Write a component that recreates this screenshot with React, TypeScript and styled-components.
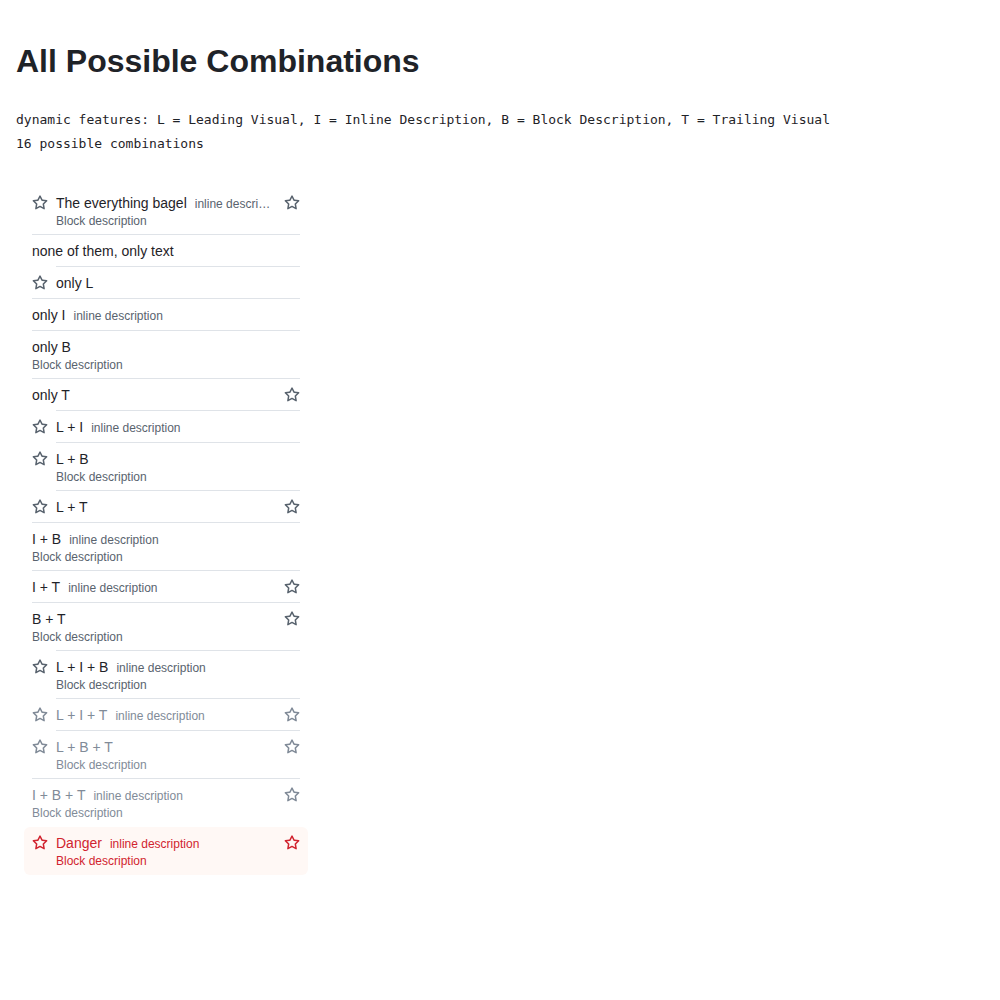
import React from "react";
import styled, { createGlobalStyle, css } from "styled-components";

const Global = createGlobalStyle`
  html, body { margin: 0; padding: 0; background: #ffffff; }
  body { font-family: "Liberation Sans", Arial, sans-serif; color: #1f2328; }
`;

const Page = styled.div`
  padding: 0 16px;
`;

const Title = styled.h1`
  margin: 0;
  padding-top: 41px;
  font-size: 32px;
  line-height: 40px;
  font-weight: 700;
  color: #1f2328;
`;

const Mono = styled.p`
  margin: 0;
  font-family: "DejaVu Sans Mono", monospace;
  font-size: 13px;
  line-height: 24px;
  color: #1f2328;
`;

const Info = styled.div`
  margin-top: 27px;
`;

const List = styled.ul`
  list-style: none;
  margin: 23px 0 0;
  padding: 8px 0;
  width: 300px;
`;

type Variant = "default" | "disabled" | "danger";

const colorFor = (v: Variant, kind: "fg" | "muted" | "icon") => {
  if (v === "danger") return "#d1242f";
  if (v === "disabled") return "#818b98";
  return kind === "fg" ? "#1f2328" : "#59636e";
};

const Item = styled.li<{ $variant: Variant; $bg?: boolean }>`
  display: flex;
  margin: 0 8px;
  padding: 0 8px;
  border-radius: 6px;
  font-size: 14px;
  line-height: 20px;
  color: ${(p) => colorFor(p.$variant, "fg")};
  ${(p) =>
    p.$bg &&
    css`
      background: #fff8f5;
    `}
`;

const Leading = styled.span<{ $variant: Variant }>`
  flex: 0 0 16px;
  width: 16px;
  height: 20px;
  margin-top: 6px;
  margin-right: 8px;
  display: flex;
  align-items: center;
  color: ${(p) => colorFor(p.$variant, "icon")};
`;

const Content = styled.div<{ $divider: boolean }>`
  flex: 1;
  min-width: 0;
  display: flex;
  padding: 6px 0;
  border-top: 1px solid ${(p) => (p.$divider ? "#dfe3e8" : "transparent")};
  margin-top: -1px;
`;

const Main = styled.div`
  flex: 1;
  min-width: 0;
  display: flex;
  flex-direction: column;
`;

const TopLine = styled.div`
  display: flex;
  align-items: baseline;
  min-width: 0;
  white-space: nowrap;
`;

const Label = styled.span`
  flex: 0 0 auto;
`;

const Inline = styled.span<{ $variant: Variant }>`
  margin-left: 8px;
  font-size: 12px;
  line-height: 16px;
  color: ${(p) => colorFor(p.$variant, "muted")};
  overflow: hidden;
  text-overflow: ellipsis;
  min-width: 0;
`;

const Block = styled.span<{ $variant: Variant }>`
  font-size: 12px;
  line-height: 16px;
  color: ${(p) => colorFor(p.$variant, "muted")};
`;

const Trailing = styled.span<{ $variant: Variant }>`
  flex: 0 0 16px;
  width: 16px;
  height: 20px;
  margin-left: 8px;
  display: flex;
  align-items: center;
  color: ${(p) => colorFor(p.$variant, "icon")};
`;

const Star = () => (
  <svg width="16" height="16" viewBox="0 0 16 16" fill="currentColor" aria-hidden="true">
    <path d="M8 .25a.75.75 0 0 1 .673.418l1.882 3.815 4.21.612a.75.75 0 0 1 .416 1.279l-3.046 2.97.719 4.192a.751.751 0 0 1-1.088.791L8 12.347l-3.766 1.98a.75.75 0 0 1-1.088-.79l.72-4.194L.818 6.374a.75.75 0 0 1 .416-1.28l4.21-.611L7.327.668A.75.75 0 0 1 8 .25Zm0 2.445L6.615 5.5a.75.75 0 0 1-.564.41l-3.097.45 2.24 2.184a.75.75 0 0 1 .216.664l-.528 3.084 2.769-1.456a.75.75 0 0 1 .698 0l2.77 1.456-.53-3.084a.75.75 0 0 1 .216-.664l2.24-2.183-3.096-.45a.75.75 0 0 1-.564-.41L8 2.694Z" />
  </svg>
);

type Row = {
  label: string;
  L?: boolean;
  I?: boolean;
  B?: boolean;
  T?: boolean;
  variant?: Variant;
  bg?: boolean;
};

const rows: Row[] = [
  { label: "The everything bagel", L: true, I: true, B: true, T: true },
  { label: "none of them, only text" },
  { label: "only L", L: true },
  { label: "only I", I: true },
  { label: "only B", B: true },
  { label: "only T", T: true },
  { label: "L + I", L: true, I: true },
  { label: "L + B", L: true, B: true },
  { label: "L + T", L: true, T: true },
  { label: "I + B", I: true, B: true },
  { label: "I + T", I: true, T: true },
  { label: "B + T", B: true, T: true },
  { label: "L + I + B", L: true, I: true, B: true },
  { label: "L + I + T", L: true, I: true, T: true, variant: "disabled" },
  { label: "L + B + T", L: true, B: true, T: true, variant: "disabled" },
  { label: "I + B + T", I: true, B: true, T: true, variant: "disabled" },
  { label: "Danger", L: true, I: true, B: true, T: true, variant: "danger", bg: true },
];

export default function App() {
  return (
    <Page>
      <Global />
      <Title>All Possible Combinations</Title>
      <Info>
        <Mono>
          dynamic features: L = Leading Visual, I = Inline Description, B = Block Description, T = Trailing Visual
        </Mono>
        <Mono>16 possible combinations</Mono>
      </Info>
      <List>
        {rows.map((r, i) => {
          const v: Variant = r.variant ?? "default";
          return (
            <Item key={r.label} $variant={v} $bg={r.bg}>
              {r.L && (
                <Leading $variant={v}>
                  <Star />
                </Leading>
              )}
              <Content $divider={i > 0 && !r.bg}>
                <Main>
                  <TopLine>
                    <Label>{r.label}</Label>
                    {r.I && <Inline $variant={v}>inline description</Inline>}
                  </TopLine>
                  {r.B && <Block $variant={v}>Block description</Block>}
                </Main>
                {r.T && (
                  <Trailing $variant={v}>
                    <Star />
                  </Trailing>
                )}
              </Content>
            </Item>
          );
        })}
      </List>
    </Page>
  );
}
